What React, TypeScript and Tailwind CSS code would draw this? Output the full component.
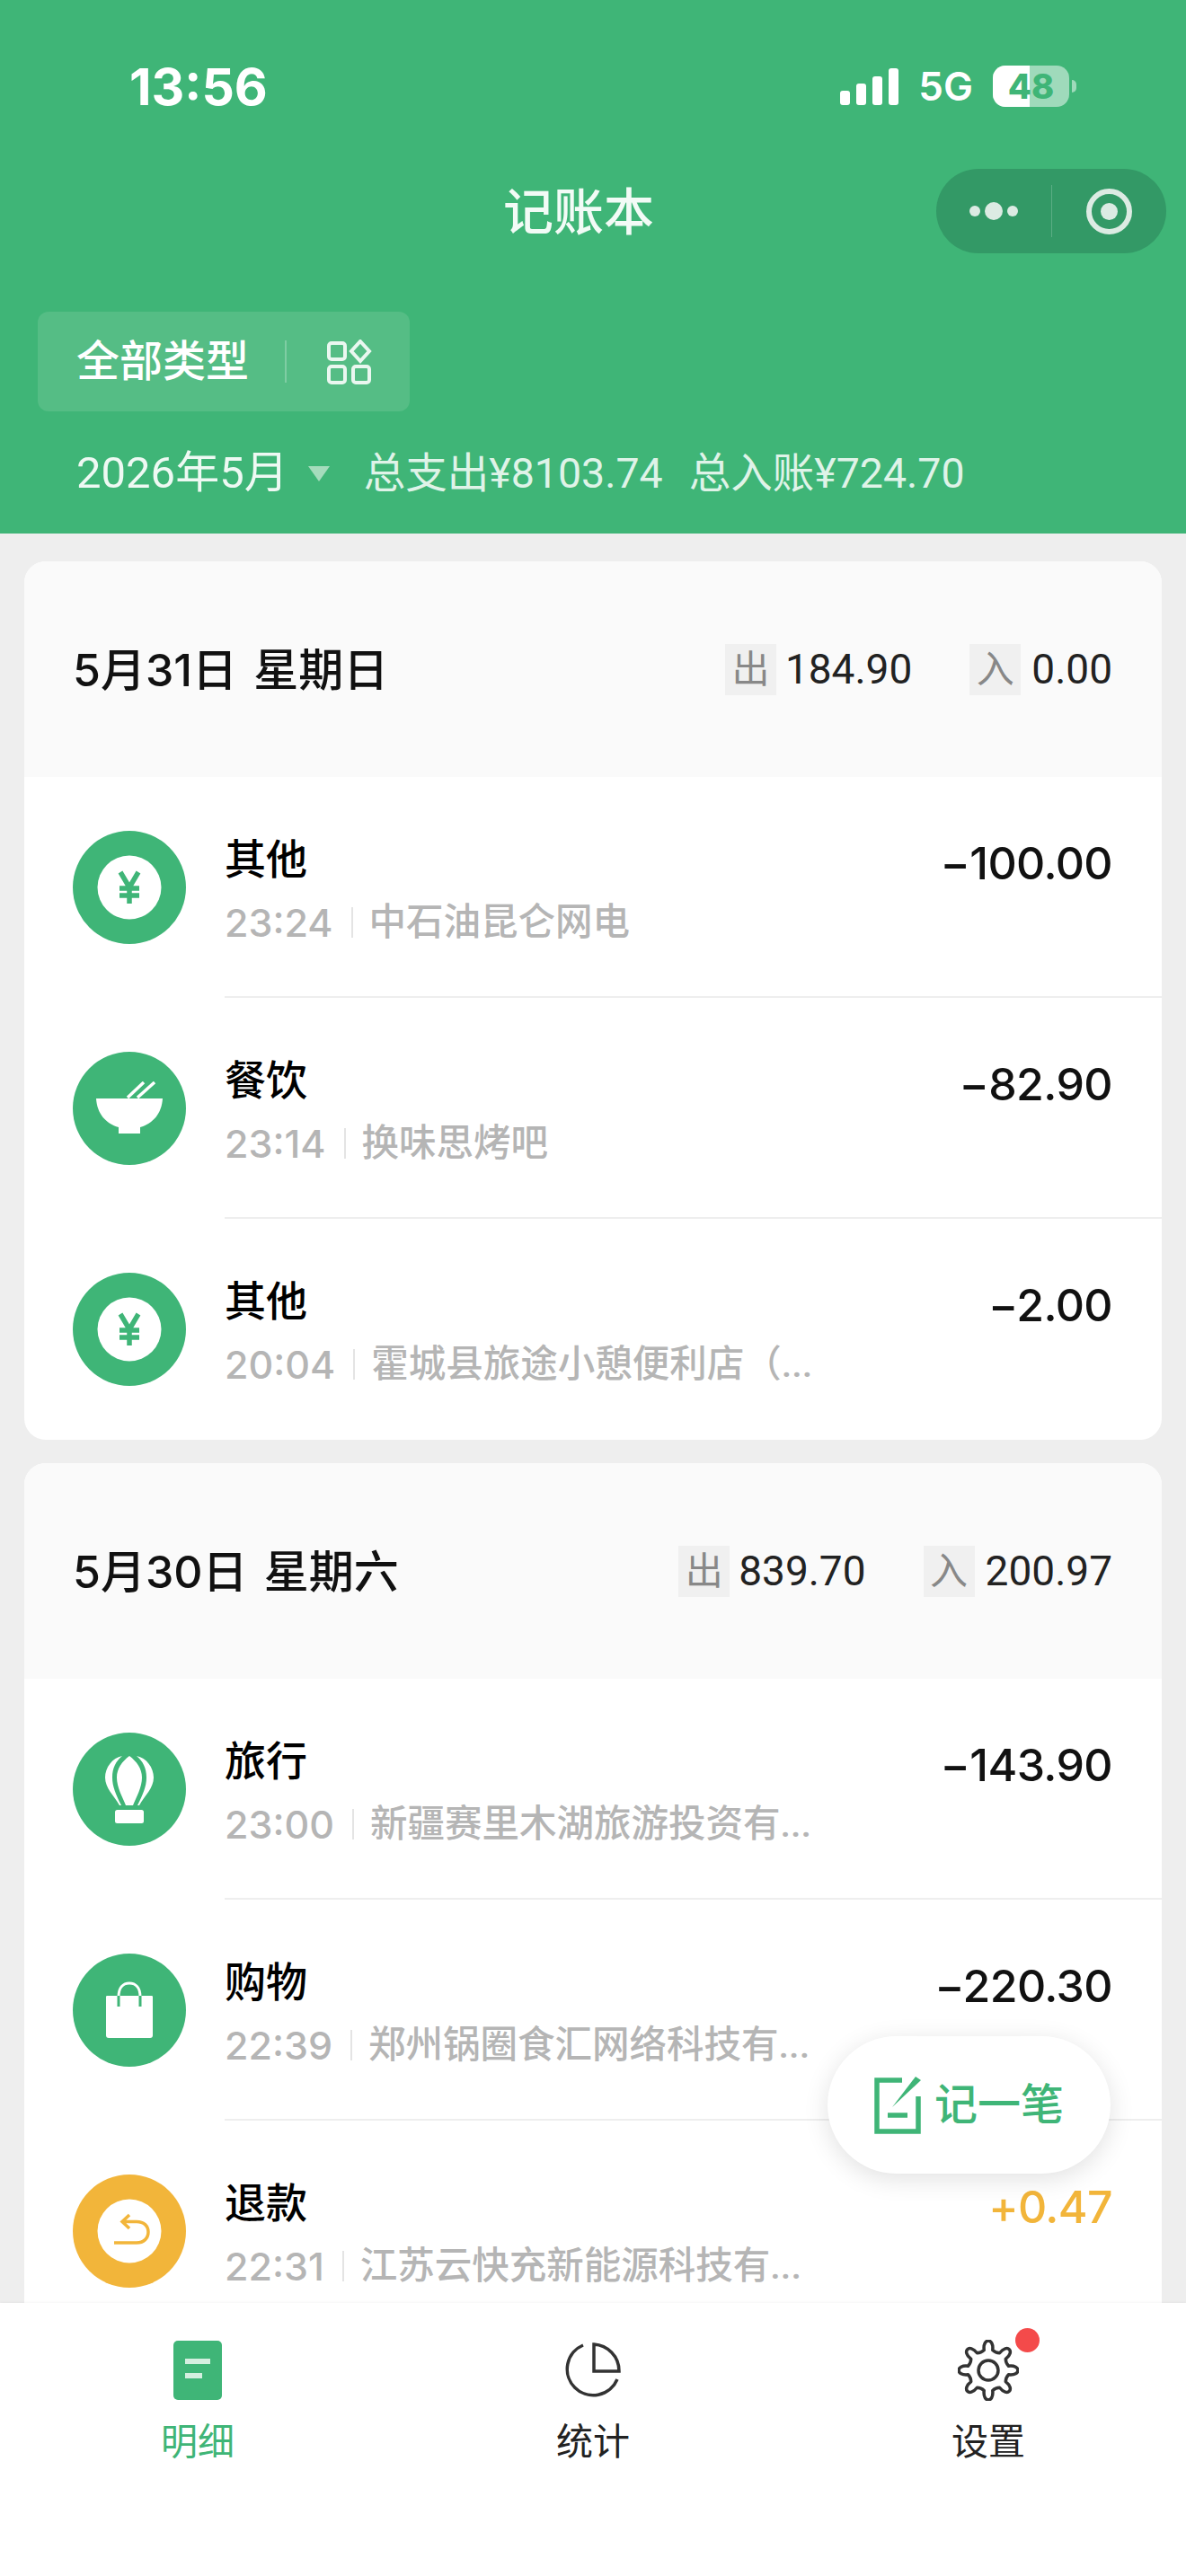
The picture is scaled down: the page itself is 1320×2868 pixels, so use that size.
import type { ReactNode } from 'react';

type IconKind = 'yen' | 'bowl' | 'balloon' | 'bag' | 'refund';

type Entry = {
    title: string;
    time: string;
    merchant: string;
    amount: string;
    icon: IconKind;
};

type Day = {
    date: string;
    out: string;
    in: string;
    entries: Entry[];
};

const days: Day[] = [
    {
        date: '5月31日 星期日',
        out: '184.90',
        in: '0.00',
        entries: [
            { title: '其他', time: '23:24', merchant: '中石油昆仑网电', amount: '−100.00', icon: 'yen' },
            { title: '餐饮', time: '23:14', merchant: '换味思烤吧', amount: '−82.90', icon: 'bowl' },
            { title: '其他', time: '20:04', merchant: '霍城县旅途小憩便利店（...', amount: '−2.00', icon: 'yen' },
        ],
    },
    {
        date: '5月30日 星期六',
        out: '839.70',
        in: '200.97',
        entries: [
            { title: '旅行', time: '23:00', merchant: '新疆赛里木湖旅游投资有...', amount: '−143.90', icon: 'balloon' },
            { title: '购物', time: '22:39', merchant: '郑州锅圈食汇网络科技有...', amount: '−220.30', icon: 'bag' },
            { title: '退款', time: '22:31', merchant: '江苏云快充新能源科技有...', amount: '+0.47', icon: 'refund' },
        ],
    },
];

// 8 rounded teeth around (34, 34)
const gearPath = () => {
    const at = (r: number, deg: number) => {
        const rad = ((deg - 90) * Math.PI) / 180;
        return `${(34 + r * Math.cos(rad)).toFixed(2)} ${(34 + r * Math.sin(rad)).toFixed(2)}`;
    };
    let d = `M${at(23, -12)}`;
    for (let i = 0; i < 8; i++) {
        const a = i * 45;
        d += ` C${at(37, a - 10)} ${at(37, a + 10)} ${at(23, a + 12)}`;
        d += ` Q${at(21, a + 22.5)} ${at(23, a + 33)}`;
    }
    return `${d} Z`;
};

const EntryIcon = ({ kind }: { kind: IconKind }) => {
    const bg = kind === 'refund' ? 'bg-[#f2b53a]' : 'bg-[#3fb577]';
    let glyph: ReactNode = null;

    if (kind === 'yen') {
        glyph = (
            <svg width="72" height="72" viewBox="0 0 72 72">
                <circle cx="36" cy="36" r="35.5" fill="#fff" />
                <path d="M26 19 L36 36 L46 19 M36 36 V54 M25 37 H47 M25 45 H47" fill="none" stroke="#3fb577" strokeWidth="5.5" />
            </svg>
        );
    }
    if (kind === 'bowl') {
        glyph = (
            <svg width="76" height="60" viewBox="0 0 76 60">
                <path d="M1 19 H75 C74 36 64 47 50 51 V58 H26 V51 C12 47 2 36 1 19 Z" fill="#fff" />
                <path d="M36 18 L54 1 M47 18 L66 1" stroke="#fff" strokeWidth="3.5" />
            </svg>
        );
    }
    if (kind === 'balloon') {
        glyph = (
            <svg width="54" height="76" viewBox="0 0 54 76">
                <path d="M19 1 C8 3 0 14 0 25 C0 37 10 45 16 56 H18 C12 44 8 35 8 25 C8 14 12 7 19 1 Z" fill="#fff" />
                <path d="M35 1 C46 3 54 14 54 25 C54 37 44 45 38 56 H36 C42 44 46 35 46 25 C46 14 42 7 35 1 Z" fill="#fff" />
                <path d="M27 1 C19 7 13 15 13 25 C13 36 19 46 23 56 H31 C35 46 41 36 41 25 C41 15 35 7 27 1 Z" fill="#fff" />
                <rect x="11" y="61" width="32" height="15" rx="2.5" fill="#fff" />
            </svg>
        );
    }
    if (kind === 'bag') {
        glyph = (
            <svg width="54" height="64" viewBox="0 0 54 64">
                <path d="M2 16 H52 A1.5 1.5 0 0 1 53 17 V60 A3 3 0 0 1 50 63 H4 A3 3 0 0 1 1 60 V17 A1.5 1.5 0 0 1 2 16 Z" fill="#fff" />
                <path d="M15 17 C15 7 20 2 27 2 C34 2 39 7 39 17" fill="none" stroke="#fff" strokeWidth="3" />
                <path d="M15 16 V28 M39 16 V28" fill="none" stroke="#3fb577" strokeWidth="3" />
            </svg>
        );
    }
    if (kind === 'refund') {
        glyph = (
            <svg width="72" height="72" viewBox="0 0 72 72">
                <circle cx="36" cy="36" r="35.5" fill="#fff" />
                <path d="M36 18 L28 25.5 L36 33 M28 25.5 H44 C52 25.5 57 30 57 37 C57 44 52 49 44 49 H19" fill="none" stroke="#f2b53a" strokeWidth="3.5" />
            </svg>
        );
    }

    return (
        <div className={`flex h-[126px] w-[126px] shrink-0 items-center justify-center rounded-full ${bg}`}>
            {glyph}
        </div>
    );
};

const DayCard = ({ day }: { day: Day }) => (
    <section className="mb-[26px] overflow-hidden rounded-[24px] bg-white">
        <header className="flex h-[240px] items-center justify-between bg-[#fafafa] pl-[54px] pr-[55px]">
            <h2 className="pt-[2px] font-['Inter','Noto_Sans_CJK_SC',sans-serif] text-[50px] font-medium text-[#111] [word-spacing:5px]">
                {day.date}
            </h2>
            <div className="flex items-center text-[46px] text-[#222]">
                <span className="mr-[10px] flex h-[57px] w-[57px] items-center justify-center bg-[#f0f0f0] text-[42px] text-[#888]">出</span>
                <span>{day.out}</span>
                <span className="ml-[64px] mr-[12px] flex h-[57px] w-[57px] items-center justify-center bg-[#f0f0f0] text-[42px] text-[#888]">入</span>
                <span>{day.in}</span>
            </div>
        </header>
        {day.entries.map((entry, index) => (
            <div key={entry.time} className="flex h-[246px] items-center pl-[54px]">
                <EntryIcon kind={entry.icon} />
                <div
                    className={`ml-[43px] flex h-full min-w-0 flex-1 justify-between pr-[55px] pt-[62px] ${
                        index < day.entries.length - 1 ? 'border-b-2 border-[#eeeeee]' : ''
                    }`}
                >
                    <div>
                        <div className="text-[46px] font-medium leading-[60px] text-black">{entry.title}</div>
                        <div className="mt-[15px] flex items-center text-[41.5px] font-medium leading-[50px] text-[#b5b5b5]">
                            <span className="font-['Inter',sans-serif] text-[43px]">{entry.time}</span>
                            <span className="ml-[20px] mr-[18px] h-[34px] w-[2px] bg-[#e4e4e4]" />
                            <span>{entry.merchant}</span>
                        </div>
                    </div>
                    <div
                        className={`pt-[3px] font-['Inter',sans-serif] text-[50px] font-medium leading-[62px] tracking-[-0.6px] ${
                            entry.amount.startsWith('+') ? 'text-[#f2b53a]' : 'text-[#111]'
                        }`}
                    >
                        {entry.amount}
                    </div>
                </div>
            </div>
        ))}
    </section>
);

const TabItem = ({ label, active, icon, dot }: { label: string; active?: boolean; icon: ReactNode; dot?: boolean }) => (
    <div className="relative flex flex-1 flex-col items-center pt-[42px]">
        <div className="relative flex h-[66px] w-[80px] items-center justify-center">
            {icon}
            {dot && <span className="absolute right-[-17px] top-[-14px] h-[27px] w-[27px] rounded-full bg-[#f44a4a]" />}
        </div>
        <span className={`mt-[21px] text-[41px] leading-[52px] ${active ? 'text-[#3fb577]' : 'text-[#222]'}`}>{label}</span>
    </div>
);

export default function App() {
    return (
        <div className="relative flex h-[2868px] w-[1320px] flex-col overflow-hidden bg-[#eeeeee] font-['Roboto','Noto_Sans_CJK_SC',sans-serif]">
            <header className="h-[594px] shrink-0 bg-[#3fb577] text-white">
                <div className="flex h-[188px] items-start justify-between pl-[144px] pr-[122px] pt-[66px] font-['Inter','Noto_Sans_CJK_SC',sans-serif]">
                    <span className="text-[57px] font-bold leading-[62px]">13:56</span>
                    <div className="flex items-center pt-[7px]">
                        <svg width="65" height="41" viewBox="0 0 65 41" fill="#fff">
                            <rect x="0" y="25" width="11" height="16" rx="3" />
                            <rect x="18" y="17" width="11" height="24" rx="3" />
                            <rect x="36" y="9" width="11" height="32" rx="3" />
                            <rect x="54" y="0" width="11" height="41" rx="3" />
                        </svg>
                        <span className="ml-[22px] text-[44px] font-semibold leading-[46px]">5G</span>
                        <div className="relative ml-[22px] flex h-[46px] w-[85px] items-center justify-center overflow-hidden rounded-[14px] bg-white/50 text-[38px] font-extrabold text-[#3fb577]">
                            <span className="absolute inset-y-0 left-0 w-[41px] bg-white" />
                            <span className="relative">48</span>
                        </div>
                        <span className="ml-[3px] h-[14px] w-[5px] rounded-r-full bg-white/50" />
                    </div>
                </div>

                <div className="relative flex h-[94px] items-center justify-center pr-[32px]">
                    <h1 className="pt-[3px] text-[56px] font-medium text-[#f2fbf6]">记账本</h1>
                    <div className="absolute right-[22px] top-0 flex h-[94px] w-[256px] items-center rounded-full bg-[#339966]">
                        <div className="flex w-[128px] items-center justify-center gap-[5px]">
                            <span className="h-[12px] w-[12px] rounded-full bg-[#dcebe3]" />
                            <span className="h-[20px] w-[20px] rounded-full bg-[#dcebe3]" />
                            <span className="h-[12px] w-[12px] rounded-full bg-[#dcebe3]" />
                        </div>
                        <span className="h-[58px] w-px bg-white/20" />
                        <div className="flex flex-1 items-center justify-center">
                            <span className="flex h-[51px] w-[51px] items-center justify-center rounded-full border-[6px] border-[#dcebe3]">
                                <span className="h-[19px] w-[19px] rounded-full bg-[#dcebe3]" />
                            </span>
                        </div>
                    </div>
                </div>

                <div className="ml-[42px] mt-[65px] flex h-[111px] w-[414px] items-center rounded-[12px] bg-[#55bd85] pl-[43px]">
                    <span className="text-[48px] font-medium">全部类型</span>
                    <span className="ml-[40px] h-[47px] w-[2px] bg-white/25" />
                    <svg className="ml-[45px]" width="50" height="50" viewBox="0 0 50 50" fill="none" stroke="#eaf7f0" strokeWidth="4">
                        <rect x="2" y="4" width="18" height="18" rx="3" />
                        <path d="M37 2 L47 13 L37 24 L27 13 Z" />
                        <rect x="2" y="30" width="18" height="18" rx="3" />
                        <rect x="29" y="30" width="18" height="18" rx="3" />
                    </svg>
                </div>

                <div className="ml-[85px] mt-[39px] flex items-center text-[46.5px] leading-[60px] text-[#dff3e8]">
                    <span className="text-[49px] text-[#eef9f3]">2026年5月</span>
                    <span className="ml-[22px] h-0 w-0 border-x-[12px] border-t-[17px] border-x-transparent border-t-[#a5dcbc]" />
                    <span className="ml-[38px]">总支出¥8103.74</span>
                    <span className="ml-[29px]">总入账¥724.70</span>
                </div>
            </header>

            <main className="min-h-0 flex-1 overflow-hidden px-[27px] pt-[31px]">
                {days.map((day) => (
                    <DayCard key={day.date} day={day} />
                ))}
            </main>

            <button className="absolute left-[921px] top-[2267px] flex h-[153px] w-[315px] items-center justify-center rounded-full bg-white text-[48px] font-medium text-[#3fb577] shadow-[0_6px_28px_rgba(0,0,0,0.12)]">
                <svg width="52" height="64" viewBox="0 0 52 64" fill="none" stroke="#3fb577" strokeWidth="5.5">
                    <path d="M31 4 H3 V61 H49 V22" />
                    <path d="M15 43 H37" />
                    <path d="M46 0 L52 4 L20 34 Z" fill="#3fb577" stroke="none" />
                </svg>
                <span className="ml-[15px]">记一笔</span>
            </button>

            <nav className="flex h-[304px] shrink-0 bg-white shadow-[0_-1px_3px_rgba(0,0,0,0.04)]">
                <TabItem
                    label="明细"
                    active
                    icon={
                        <svg width="54" height="66" viewBox="0 0 54 66">
                            <rect width="54" height="66" rx="5" fill="#3fb577" />
                            <rect x="13" y="20" width="28" height="6" fill="#d5efe0" />
                            <rect x="13" y="36" width="19" height="6" fill="#d5efe0" />
                        </svg>
                    }
                />
                <TabItem
                    label="统计"
                    icon={
                        <svg width="62" height="62" viewBox="0 0 62 62" fill="none" stroke="#333" strokeWidth="3.5">
                            <path d="M20 3 A29 29 0 1 0 58 41" />
                            <path d="M32 2 V32 H60 C60 15 47 3 32 2 Z" />
                        </svg>
                    }
                />
                <TabItem
                    label="设置"
                    dot
                    icon={
                        <svg width="68" height="68" viewBox="0 0 68 68" fill="none" stroke="#333" strokeWidth="3.5">
                            <path d={gearPath()} strokeLinejoin="round" />
                            <circle cx="34" cy="34" r="11" />
                        </svg>
                    }
                />
            </nav>
        </div>
    );
}
